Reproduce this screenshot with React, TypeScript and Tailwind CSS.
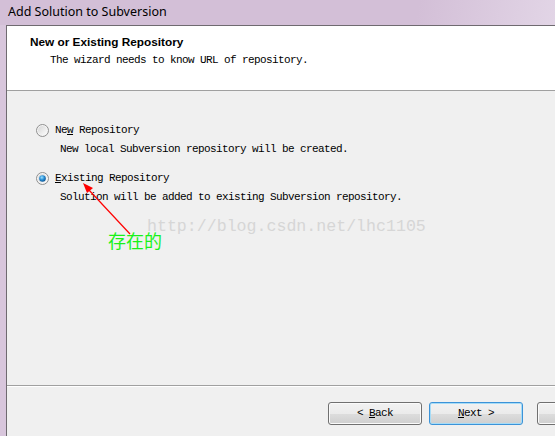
import React from "react";

const mono = { fontFamily: '"Liberation Mono", "DejaVu Sans Mono", monospace' };

function Radio({ checked }: { checked?: boolean }) {
  return (
    <svg width="13" height="13" viewBox="0 0 13 13" className="shrink-0">
      <defs>
        <linearGradient id={checked ? "rg1" : "rg0"} x1="0" y1="0" x2="1" y2="1">
          <stop offset="0" stopColor="#d6d6d6" />
          <stop offset="1" stopColor="#fdfdfd" />
        </linearGradient>
        <radialGradient id="dot" cx="0.4" cy="0.35" r="0.7">
          <stop offset="0" stopColor="#9ee3ff" />
          <stop offset="0.5" stopColor="#2a8fd6" />
          <stop offset="1" stopColor="#0a4f8c" />
        </radialGradient>
      </defs>
      <circle cx="6.5" cy="6.5" r="6" fill="#f4f4f4" stroke="#8f8f8f" />
      <circle cx="6.5" cy="6.5" r="4.5" fill={`url(#${checked ? "rg1" : "rg0"})`} />
      {checked && <circle cx="6.5" cy="6.5" r="3.3" fill="url(#dot)" />}
    </svg>
  );
}

function WinButton({ children, focused }: { children?: React.ReactNode; focused?: boolean }) {
  return (
    <div
      className={`shrink-0 h-[23px] w-[94px] rounded-[3px] border flex items-center justify-center text-[11px] tracking-[-0.6px] text-black bg-[linear-gradient(#f2f2f2_0%,#ebebeb_50%,#dddddd_51%,#cfcfcf_100%)] ${
        focused ? "border-[#3c93d8] shadow-[inset_0_0_0_1px_#a6dcf7]" : "border-[#707070] shadow-[inset_0_0_0_1px_#fafafa]"
      }`}
      style={mono}
    >
      {children}
    </div>
  );
}

export default function App() {
  return (
    <div className="relative w-[555px] h-[436px] overflow-hidden flex flex-col bg-[#d6c2da]">
      {/* TITLE BAR */}
      <div className="h-[25px] shrink-0 flex items-center pl-2 bg-[linear-gradient(100deg,#d3bfd7_0%,#d3bfd7_75%,#e2d5e6_100%)]">
        <span className="text-[12.5px] text-black leading-none" style={{ fontFamily: '"Noto Sans", "Open Sans", sans-serif' }}>
          Add Solution to Subversion
        </span>
      </div>

      <div className="flex flex-1 min-h-0">
        {/* LEFT FRAME */}
        <div className="w-[6px] shrink-0 bg-[#d8c6dc]" />

        {/* WINDOW BODY */}
        <div className="flex-1 flex flex-col border-l border-t border-[#6f6a70] bg-[#f0f0f0]">
          {/* HEADER */}
          <div className="h-[65px] shrink-0 bg-white border-b border-[#a0a0a0] pl-[23px] pt-[9px]">
            <div className="text-[11.8px] font-bold text-black leading-[14px]" style={{ fontFamily: '"Liberation Sans", Arial, sans-serif' }}>
              New or Existing Repository
            </div>
            <div className="mt-[5px] pl-[20px] text-[11px] tracking-[-0.6px] leading-[13px] text-black" style={mono}>
              The wizard needs to know URL of repository.
            </div>
          </div>

          {/* OPTIONS */}
          <div className="flex-1 flex flex-col pl-[29px] pt-[33px] border-b border-[#a0a0a0] text-[11px] tracking-[-0.6px] leading-[13px] text-black" style={mono}>
            <div className="flex items-center gap-[6px] h-[13px]">
              <Radio />
              <span>
                Ne<span className="underline">w</span> Repository
              </span>
            </div>
            <div className="mt-[6px] pl-[24px] h-[13px]">New local Subversion repository will be created.</div>
            <div className="mt-[16px] flex items-center gap-[6px] h-[13px]">
              <Radio checked />
              <span>
                <span className="underline">E</span>xisting Repository
              </span>
            </div>
            <div className="mt-[6px] pl-[24px] h-[13px]">Solution will be added to existing Subversion repository.</div>
          </div>

          {/* FOOTER */}
          <div className="h-[50px] shrink-0 border-t border-white flex items-start pt-[15px] pl-[321px]">
            <WinButton>
              &lt;&nbsp;<span className="underline">B</span>ack
            </WinButton>
            <div className="ml-[7px] shrink-0">
              <WinButton focused>
                <span className="underline">N</span>ext&nbsp;&gt;
              </WinButton>
            </div>
            <div className="ml-[14px] shrink-0">
              <WinButton />
            </div>
          </div>
        </div>
      </div>

      {/* WATERMARK */}
      <div className="absolute left-[147px] top-[217px] text-[16.6px] leading-[20px] text-[#d6d6d6] whitespace-nowrap" style={mono}>
        http://blog.csdn.net/lhc1105
      </div>

      {/* ANNOTATION ARROW */}
      <svg className="absolute left-0 top-0 pointer-events-none" width="555" height="436">
        <line x1="130" y1="234" x2="88" y2="189" stroke="#ff0000" strokeWidth="1.2" />
        <polygon points="83,183 93,188 87,193" fill="#ff0000" />
      </svg>
      <div
        className="absolute left-[108px] top-[229px] text-[18px] leading-[22px] text-[#19f219] whitespace-nowrap"
        style={{ fontFamily: '"Noto Sans CJK SC", sans-serif' }}
      >
        存在的
      </div>
    </div>
  );
}
